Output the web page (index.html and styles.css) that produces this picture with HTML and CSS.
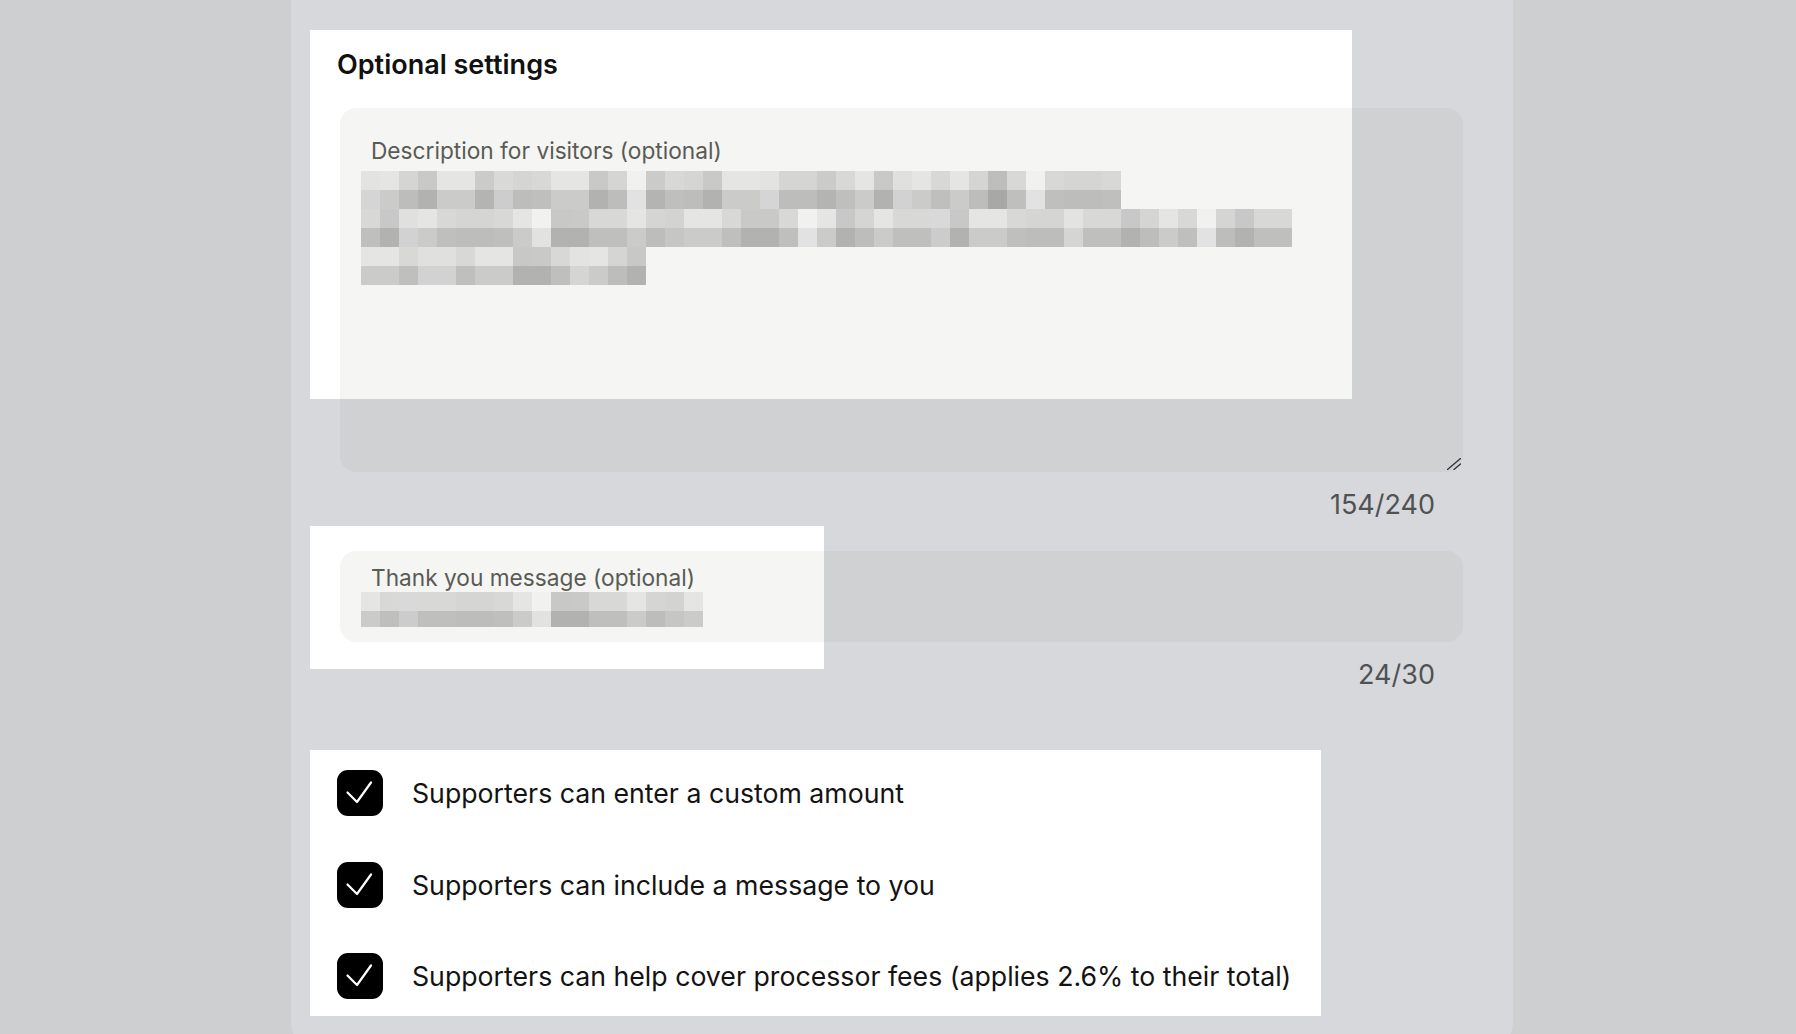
FILE: index.html
```html
<!DOCTYPE html>
<html lang="en">
<head>
<meta charset="utf-8">
<title>Optional settings</title>
<link rel="stylesheet" href="styles.css">
</head>
<body>
<div class="page">
  <section class="settings">
    <h2 class="title">Optional settings</h2>

    <div class="field field-area">
      <div class="field-label">Description for visitors (optional)</div>
      <div class="pixels">
        <div class="px-line w40"></div>
        <div class="px-line w49 shift"></div>
        <div class="px-line w15 shift2"></div>
      </div>
      <svg class="grip" viewBox="0 0 14 12" width="14" height="12" aria-hidden="true">
        <path d="M0.5 11.5 L13.5 0.5 M7 11.5 L13.5 6" stroke="#111" stroke-width="1.3" fill="none" stroke-linecap="round"/>
      </svg>
    </div>
    <div class="counter">154/240</div>

    <div class="field field-input">
      <div class="field-label">Thank you message (optional)</div>
      <div class="pixels">
        <div class="px-line w18 short shift"></div>
      </div>
    </div>
    <div class="counter counter-2">24/30</div>

    <ul class="checks">
      <li class="check">
        <span class="box"><svg viewBox="0 0 46 46" width="46" height="46" aria-hidden="true"><path d="M10.5 22.5 L20 32 L34 12.5" stroke="#fff" stroke-width="2.2" fill="none" stroke-linecap="round" stroke-linejoin="round"/></svg></span>
        <span class="check-text">Supporters can enter a custom amount</span>
      </li>
      <li class="check">
        <span class="box"><svg viewBox="0 0 46 46" width="46" height="46" aria-hidden="true"><path d="M10.5 22.5 L20 32 L34 12.5" stroke="#fff" stroke-width="2.2" fill="none" stroke-linecap="round" stroke-linejoin="round"/></svg></span>
        <span class="check-text">Supporters can include a message to you</span>
      </li>
      <li class="check">
        <span class="box"><svg viewBox="0 0 46 46" width="46" height="46" aria-hidden="true"><path d="M10.5 22.5 L20 32 L34 12.5" stroke="#fff" stroke-width="2.2" fill="none" stroke-linecap="round" stroke-linejoin="round"/></svg></span>
        <span class="check-text">Supporters can help cover processor fees (applies 2.6% to their total)</span>
      </li>
    </ul>
  </section>
</div>

<svg class="overlay" viewBox="0 0 1796 1034" preserveAspectRatio="none" aria-hidden="true">
  <path fill-rule="evenodd" d="M0 0H1796V1034H0Z M310 30V399H1352V30Z M310 526V669H824V526Z M310 750V1016H1321V750Z"/>
</svg>
</body>
</html>
```

FILE: styles.css
```css
html, body {
  margin: 0;
  padding: 0;
  overflow: hidden;
}

body {
  background: #f3f2ef;
  font-family: Inter, "Noto Sans", "Liberation Sans", sans-serif;
  color: #161616;
}

.page {
  margin-left: 291px;
  width: 1222px;
  height: 1054px;
  box-sizing: border-box;
  background: #ffffff;
  border-radius: 0 0 32px 32px;
  padding: 50px 50px 0 49px;
}

.settings {
  display: flex;
  flex-direction: column;
}

.title {
  margin: 0 0 0 -3px;
  font-size: 27px;
  line-height: 30px;
  font-weight: 600;
  color: #111111;
}

.field {
  position: relative;
  box-sizing: border-box;
  background: #f5f5f3;
  border-radius: 16px;
}

.field-area {
  margin-top: 28px;
  height: 364px;
  padding: 29px 31px 0;
}

.field-input {
  margin-top: 31px;
  height: 91px;
  padding: 13px 31px 0;
}

.field-label {
  font-size: 22.7px;
  line-height: 28px;
  color: #595b54;
}

.pixels {
  margin-left: -10px;
  margin-top: 6px;
  display: flex;
  flex-direction: column;
}

.field-input .pixels {
  margin-top: 0;
}

.px-line {
  height: 38px;
  background:
    repeating-linear-gradient(90deg, rgba(0,0,0,0.06) 0 19px, transparent 19px 57px),
    repeating-linear-gradient(90deg, transparent 0 38px, rgba(0,0,0,0.07) 38px 76px, transparent 76px 95px),
    repeating-linear-gradient(90deg, rgba(255,255,255,0.45) 0 19px, transparent 19px 133px),
    repeating-linear-gradient(90deg, transparent 0 114px, rgba(0,0,0,0.06) 114px 152px, transparent 152px 171px),
    linear-gradient(180deg, #e5e5e4 0 19px, #cbcbca 19px 38px);
}

.px-line.shift {
  background-position: 19px 0, 57px 0, 38px 0, 95px 0, 0 0;
}

.px-line.shift2 {
  background-position: 38px 0, 19px 0, 76px 0, 57px 0, 0 0;
}

.px-line.short {
  height: 35px;
}

.w40 { width: 760px; }
.w49 { width: 931px; }
.w15 { width: 285px; }
.w18 { width: 342px; }

.grip {
  position: absolute;
  right: 2px;
  bottom: 2px;
}

.counter {
  margin-top: 18px;
  padding-right: 28px;
  text-align: right;
  font-size: 27px;
  line-height: 30px;
  color: #3d3f3a;
}

.counter-2 {
  margin-top: 18px;
}

.checks {
  list-style: none;
  margin: 80px 0 0;
  padding: 0;
  display: flex;
  flex-direction: column;
  gap: 45.5px;
}

.check {
  display: flex;
  align-items: center;
  height: 46px;
}

.box {
  width: 46px;
  height: 46px;
  flex: 0 0 46px;
  margin-left: -3px;
  background: #000000;
  border-radius: 11px;
  display: flex;
}

.check-text {
  margin-left: 29px;
  font-size: 26.7px;
  line-height: 32px;
  color: #131313;
}

.overlay {
  position: fixed;
  inset: 0;
  width: 100%;
  height: 100%;
  pointer-events: none;
  fill: rgba(122, 125, 138, 0.3);
}
```
